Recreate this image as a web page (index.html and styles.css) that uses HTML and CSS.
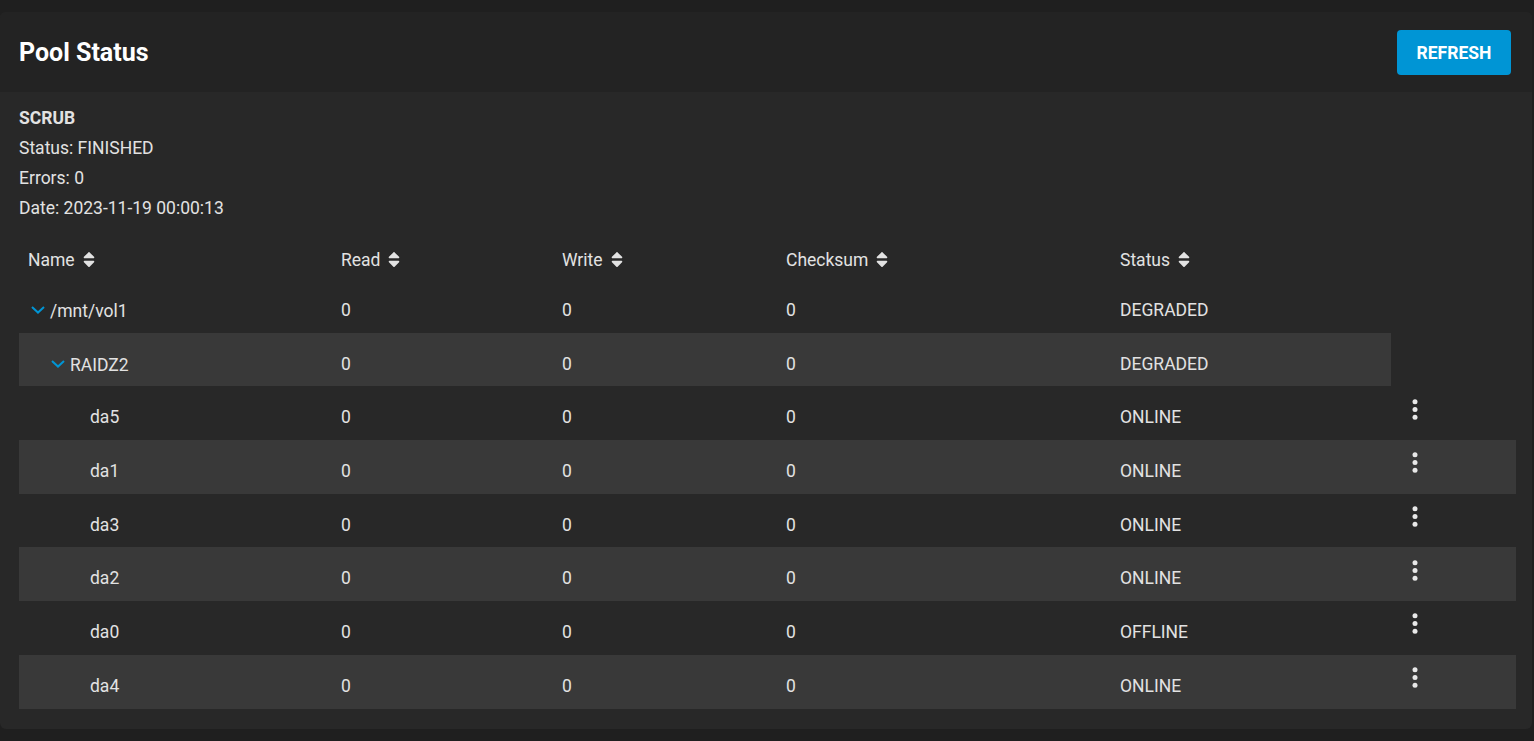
FILE: index.html
```html
<!DOCTYPE html>
<html lang="en">
<head>
<meta charset="utf-8">
<title>Pool Status</title>
<link rel="stylesheet" href="styles.css">
</head>
<body>
<div class="page">
  <section class="card">
    <header class="card-header">
      <h1 class="title">Pool Status</h1>
      <button class="btn-refresh" type="button">REFRESH</button>
    </header>
    <div class="card-body">
      <div class="scrub">
        <div class="scrub-title">SCRUB</div>
        <div>Status: FINISHED</div>
        <div>Errors: 0</div>
        <div>Date: 2023-11-19 00:00:13</div>
      </div>
      <table class="pool-table">
        <colgroup>
          <col class="c-name"><col class="c-read"><col class="c-write"><col class="c-sum"><col class="c-status"><col class="c-act">
        </colgroup>
        <thead>
          <tr>
            <th><span class="th">Name <svg class="sort" viewBox="0 0 320 512"><path d="M41 288h238c21.4 0 32.1 25.9 17 41L177 448c-9.4 9.4-24.6 9.4-33.9 0L24 329c-15.1-15.1-4.4-41 17-41zm255-105L177 64c-9.4-9.4-24.6-9.4-33.9 0L24 183c-15.1 15.1-4.4 41 17 41h238c21.4 0 32.1-25.9 17-41z"/></svg></span></th>
            <th><span class="th">Read <svg class="sort" viewBox="0 0 320 512"><path d="M41 288h238c21.4 0 32.1 25.9 17 41L177 448c-9.4 9.4-24.6 9.4-33.9 0L24 329c-15.1-15.1-4.4-41 17-41zm255-105L177 64c-9.4-9.4-24.6-9.4-33.9 0L24 183c-15.1 15.1-4.4 41 17 41h238c21.4 0 32.1-25.9 17-41z"/></svg></span></th>
            <th><span class="th">Write <svg class="sort" viewBox="0 0 320 512"><path d="M41 288h238c21.4 0 32.1 25.9 17 41L177 448c-9.4 9.4-24.6 9.4-33.9 0L24 329c-15.1-15.1-4.4-41 17-41zm255-105L177 64c-9.4-9.4-24.6-9.4-33.9 0L24 183c-15.1 15.1-4.4 41 17 41h238c21.4 0 32.1-25.9 17-41z"/></svg></span></th>
            <th><span class="th">Checksum <svg class="sort" viewBox="0 0 320 512"><path d="M41 288h238c21.4 0 32.1 25.9 17 41L177 448c-9.4 9.4-24.6 9.4-33.9 0L24 329c-15.1-15.1-4.4-41 17-41zm255-105L177 64c-9.4-9.4-24.6-9.4-33.9 0L24 183c-15.1 15.1-4.4 41 17 41h238c21.4 0 32.1-25.9 17-41z"/></svg></span></th>
            <th><span class="th">Status <svg class="sort" viewBox="0 0 320 512"><path d="M41 288h238c21.4 0 32.1 25.9 17 41L177 448c-9.4 9.4-24.6 9.4-33.9 0L24 329c-15.1-15.1-4.4-41 17-41zm255-105L177 64c-9.4-9.4-24.6-9.4-33.9 0L24 183c-15.1 15.1-4.4 41 17 41h238c21.4 0 32.1-25.9 17-41z"/></svg></span></th>
            <th></th>
          </tr>
        </thead>
        <tbody>
          <tr>
            <td><span class="name lvl0"><svg class="chev" viewBox="0 0 14 8"><polyline points="1,1 7,6.6 13,1"/></svg>/mnt/vol1</span></td>
            <td>0</td><td>0</td><td>0</td><td>DEGRADED</td>
          </tr>
          <tr class="alt">
            <td><span class="name lvl1"><svg class="chev" viewBox="0 0 14 8"><polyline points="1,1 7,6.6 13,1"/></svg>RAIDZ2</span></td>
            <td>0</td><td>0</td><td>0</td><td>DEGRADED</td>
          </tr>
          <tr>
            <td><span class="name leaf">da5</span></td>
            <td>0</td><td>0</td><td>0</td><td>ONLINE</td>
            <td class="act"><button class="kebab" type="button"><svg viewBox="0 0 6 21"><circle cx="3" cy="2.8" r="2.5"/><circle cx="3" cy="10.5" r="2.5"/><circle cx="3" cy="18.2" r="2.5"/></svg></button></td>
          </tr>
          <tr class="alt">
            <td><span class="name leaf">da1</span></td>
            <td>0</td><td>0</td><td>0</td><td>ONLINE</td>
            <td class="act"><button class="kebab" type="button"><svg viewBox="0 0 6 21"><circle cx="3" cy="2.8" r="2.5"/><circle cx="3" cy="10.5" r="2.5"/><circle cx="3" cy="18.2" r="2.5"/></svg></button></td>
          </tr>
          <tr>
            <td><span class="name leaf">da3</span></td>
            <td>0</td><td>0</td><td>0</td><td>ONLINE</td>
            <td class="act"><button class="kebab" type="button"><svg viewBox="0 0 6 21"><circle cx="3" cy="2.8" r="2.5"/><circle cx="3" cy="10.5" r="2.5"/><circle cx="3" cy="18.2" r="2.5"/></svg></button></td>
          </tr>
          <tr class="alt">
            <td><span class="name leaf">da2</span></td>
            <td>0</td><td>0</td><td>0</td><td>ONLINE</td>
            <td class="act"><button class="kebab" type="button"><svg viewBox="0 0 6 21"><circle cx="3" cy="2.8" r="2.5"/><circle cx="3" cy="10.5" r="2.5"/><circle cx="3" cy="18.2" r="2.5"/></svg></button></td>
          </tr>
          <tr>
            <td><span class="name leaf">da0</span></td>
            <td>0</td><td>0</td><td>0</td><td>OFFLINE</td>
            <td class="act"><button class="kebab" type="button"><svg viewBox="0 0 6 21"><circle cx="3" cy="2.8" r="2.5"/><circle cx="3" cy="10.5" r="2.5"/><circle cx="3" cy="18.2" r="2.5"/></svg></button></td>
          </tr>
          <tr class="alt">
            <td><span class="name leaf">da4</span></td>
            <td>0</td><td>0</td><td>0</td><td>ONLINE</td>
            <td class="act"><button class="kebab" type="button"><svg viewBox="0 0 6 21"><circle cx="3" cy="2.8" r="2.5"/><circle cx="3" cy="10.5" r="2.5"/><circle cx="3" cy="18.2" r="2.5"/></svg></button></td>
          </tr>
        </tbody>
      </table>
    </div>
  </section>
</div>
</body>
</html>
```
FILE: styles.css
```css
html, body {
  margin: 0;
  background: #1f1f1f;
}
body {
  font-family: Roboto, "Liberation Sans", sans-serif;
  font-size: 17.5px;
  color: #e2e2e2;
}
.page {
  padding: 12px 2px 0 0;
}
.card {
  background: #282828;
  border-radius: 6px;
  overflow: hidden;
}
.card-header {
  height: 80px;
  display: flex;
  align-items: center;
  justify-content: space-between;
  padding: 0 21px 0 19px;
  background: #232323;
}
.title {
  margin: 0;
  font-size: 25px;
  font-weight: 700;
  color: #ffffff;
}
.btn-refresh {
  width: 114px;
  height: 45px;
  margin-top: 1px;
  background: #0095d5;
  border: 0;
  border-radius: 4px;
  color: #ffffff;
  font-family: Roboto, "Liberation Sans", sans-serif;
  font-size: 17.5px;
  font-weight: 700;
  padding: 0;
}
.card-body {
  padding: 11px 16px 20px 19px;
}
.scrub {
  line-height: 30px;
}
.scrub-title {
  font-weight: 700;
}
.pool-table {
  margin-top: 8px;
  width: 100%;
  border-collapse: collapse;
  table-layout: fixed;
}
.c-name { width: 313px; }
.c-read { width: 221px; }
.c-write { width: 224px; }
.c-sum { width: 334px; }
.c-status { width: 280px; }
.c-act { width: 125px; }
.pool-table th {
  box-sizing: border-box;
  height: 48px;
  padding: 9px 9px 0 9px;
  text-align: left;
  font-weight: 400;
  vertical-align: middle;
  line-height: 20px;
}
.th {
  display: inline-flex;
  align-items: center;
  gap: 8px;
}
.sort {
  width: 12px;
  height: 19px;
  fill: #e2e2e2;
}
.pool-table td {
  box-sizing: border-box;
  height: 53.7px;
  padding: 8px 9px 0 9px;
  vertical-align: middle;
  line-height: 20px;
  white-space: nowrap;
}
.pool-table tr.alt td {
  background: #393939;
}
.name {
  display: inline-flex;
  align-items: center;
}
.chev {
  width: 20px;
  height: 8px;
  padding: 0 3px;
  box-sizing: border-box;
  margin-right: 2px;
  margin-top: -2px;
  fill: none;
  stroke: #0095d5;
  stroke-width: 2;
}
.lvl1 { padding-left: 20px; }
.leaf { padding-left: 62px; }
.pool-table td.act {
  padding: 0 0 8px 0;
}
.kebab {
  display: flex;
  align-items: center;
  justify-content: center;
  width: 48px;
  height: 40px;
  padding: 0;
  background: none;
  border: 0;
}
.kebab svg {
  width: 6px;
  height: 21px;
  fill: #e8e8e8;
}
```
